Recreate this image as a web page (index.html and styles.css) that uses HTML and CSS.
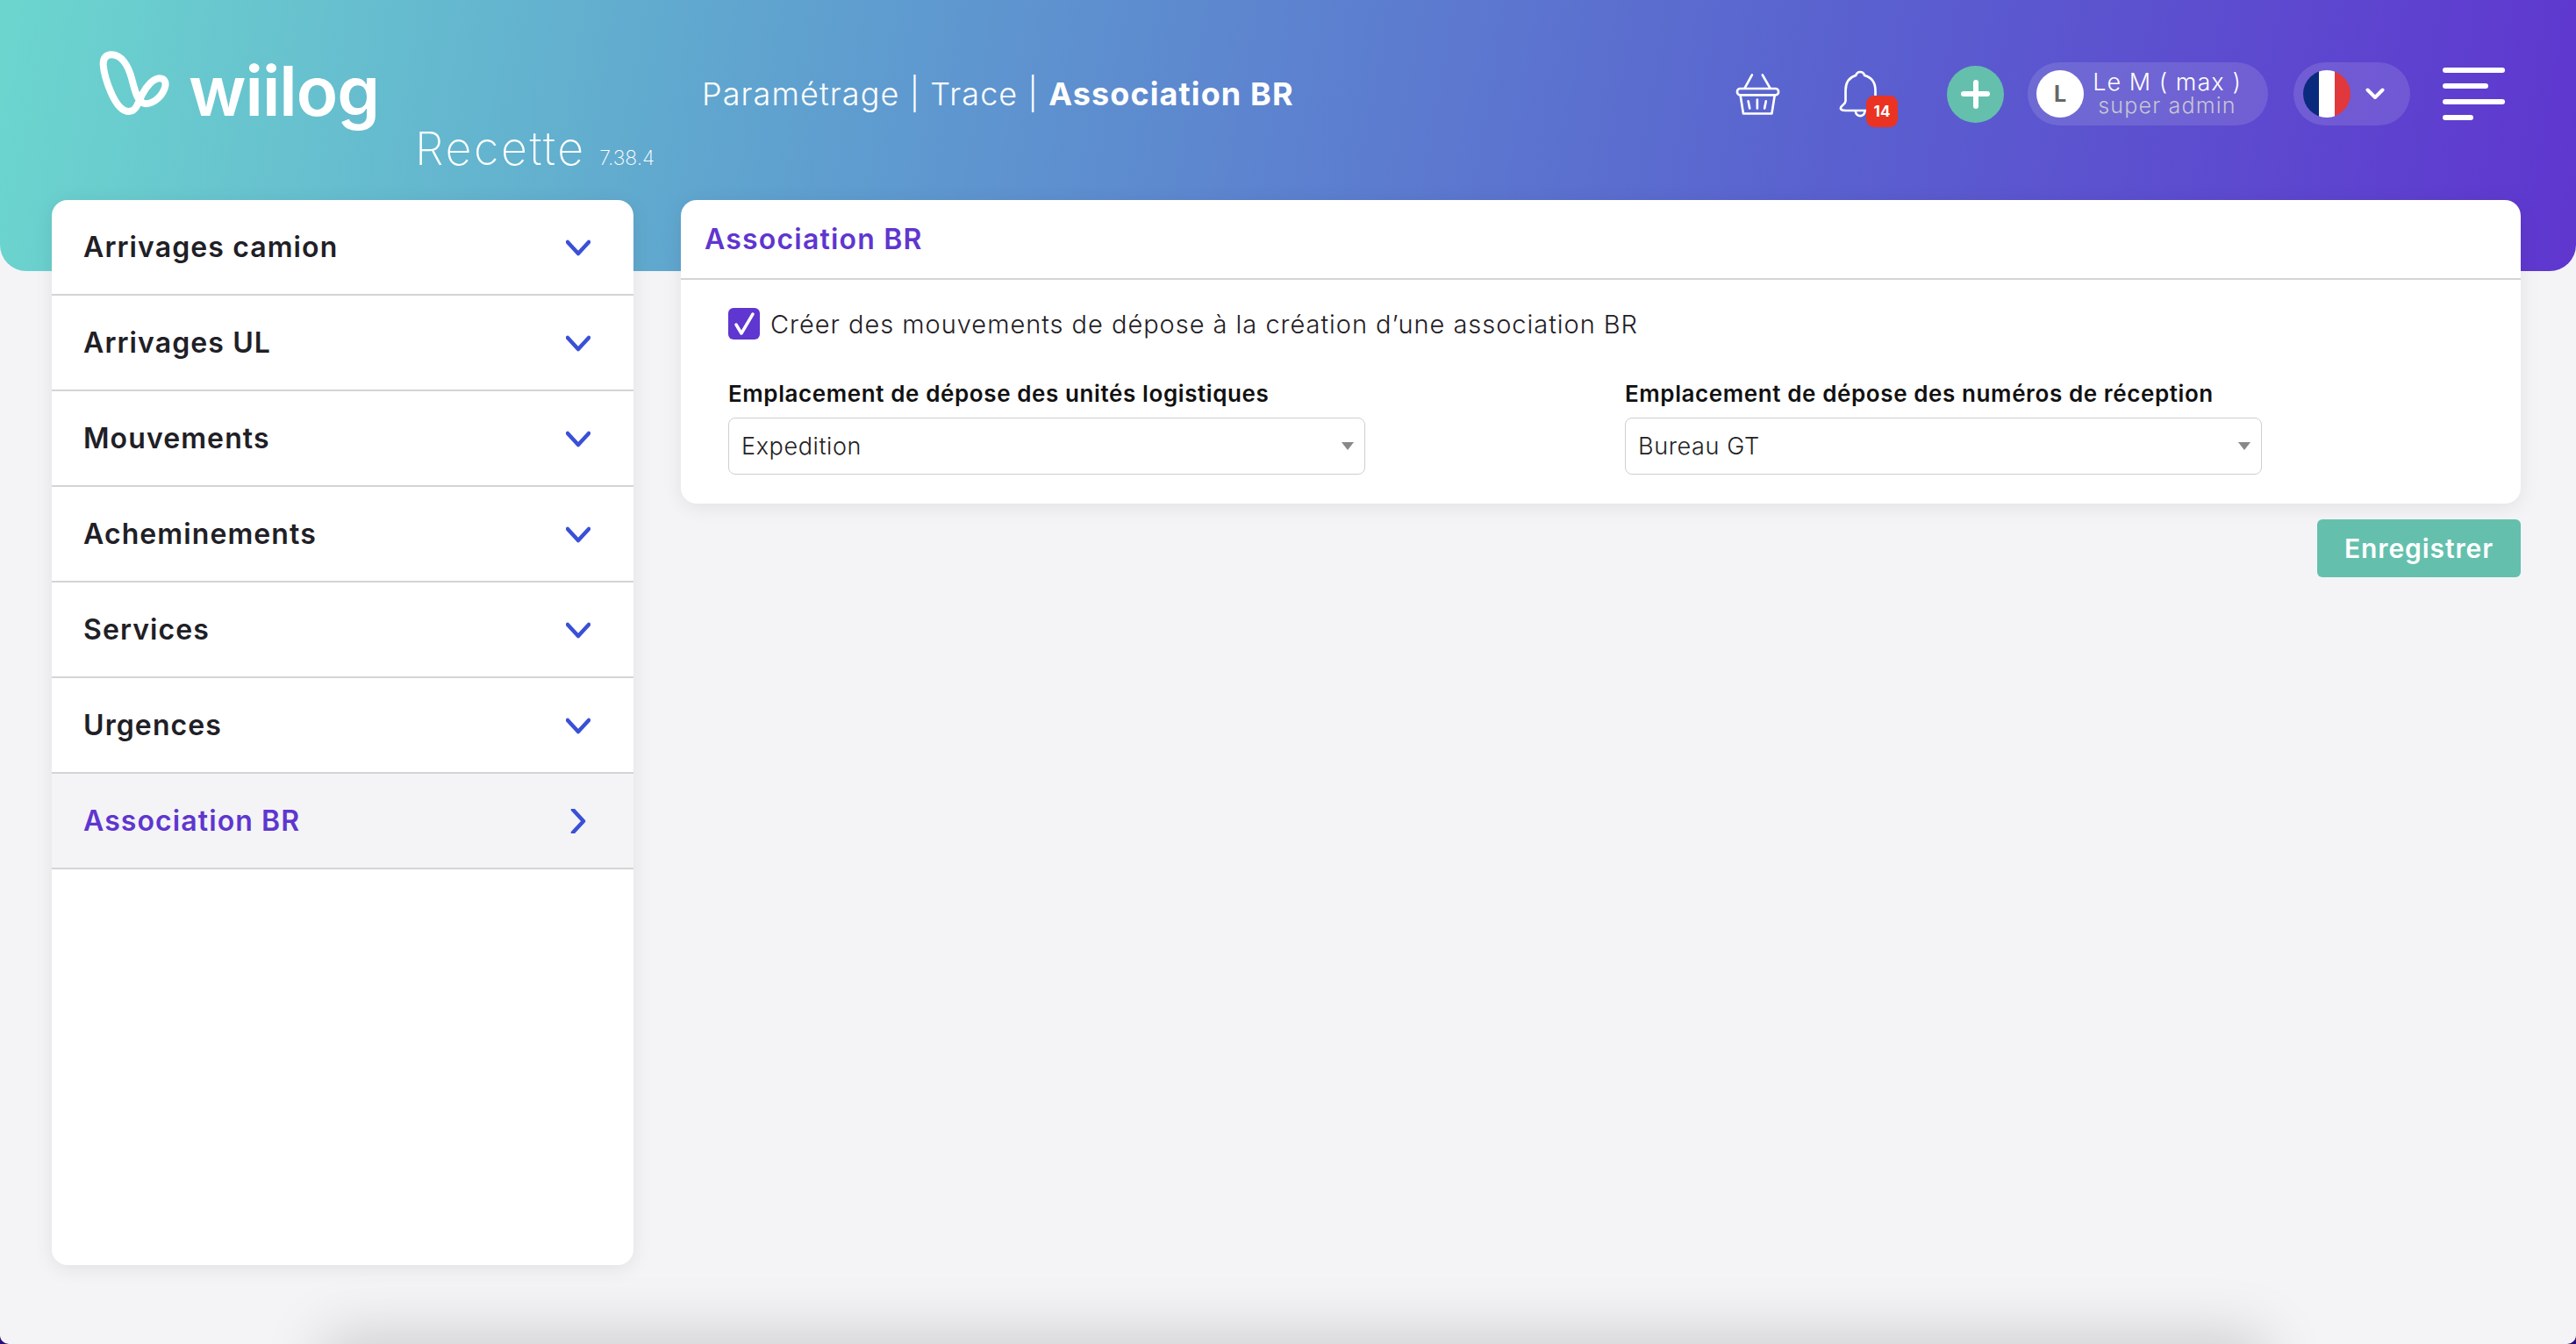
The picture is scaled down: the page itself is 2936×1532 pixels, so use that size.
FILE: index.html
```html
<!DOCTYPE html>
<html lang="fr">
<head>
  <meta charset="UTF-8" />
  <meta name="viewport" content="width=device-width, initial-scale=1.0"/>
  <title>Association BR</title>
  <link rel="stylesheet" href="styles.css">
</head>
<body>
  <div class="page">

    <header class="top-bar">
      <div class="brand">
        <div class="logo">
          <svg class="logo-mark" viewBox="0 0 290 250" width="97" height="83">
            <path d="M80 37 C60 37 52 50 52 70 C55 110 90 232 140 232 C165 232 170 205 185 175 C200 145 225 118 245 118 C265 118 270 135 262 155 C250 185 220 208 195 205 C170 200 162 165 150 120 C138 75 115 37 80 37 Z" fill="none" stroke="#fff" stroke-width="24"/>
          </svg>
          <span class="logo-name">wiilog</span>
        </div>
        <div class="env">Recette <span class="version">7.38.4</span></div>
      </div>

      <div class="breadcrumb">Paramétrage | Trace | <strong>Association BR</strong></div>

      <div class="actions">
        <svg class="basket" viewBox="50 65 160 150" width="53" height="50" fill="none" stroke="#fff" stroke-width="8" stroke-linecap="round" stroke-linejoin="round">
          <rect x="59" y="122" width="142" height="22" rx="10"/>
          <path d="M70 145 L80 208 H178 L188 145"/>
          <path d="M85 120 L110 75 M172 120 L146 75"/>
          <path d="M97 165 L102 190 M128 160 V190 M158 165 L153 190"/>
        </svg>
        <div class="bell">
          <svg viewBox="405 60 140 165" width="47" height="55" fill="none" stroke="#fff" stroke-width="8" stroke-linecap="round" stroke-linejoin="round">
            <path d="M465 78 C470 62 490 62 495 78 C520 85 532 105 532 130 V165 M465 78 C440 85 430 105 430 130 V165 C430 178 414 180 413 190 C413 197 420 198 430 198 H530"/>
            <path d="M464 200 C466 222 494 222 496 200"/>
          </svg>
          <span class="bell-count">14</span>
        </div>
        <div class="add-btn"><span class="plus"></span></div>
        <div class="user-pill">
          <div class="avatar">L</div>
          <div class="user-text">
            <div class="user-name">Le M ( max )</div>
            <div class="user-role">super admin</div>
          </div>
        </div>
        <div class="lang-pill">
          <div class="flag"><i class="blue"></i><i class="white"></i><i class="red"></i></div>
          <svg viewBox="0 0 22 14" width="22" height="14" fill="none" stroke="#fff" stroke-width="4" stroke-linecap="round" stroke-linejoin="round"><path d="M2.5 2.5 L11 11 L19.5 2.5"/></svg>
        </div>
        <div class="burger"><span class="l1"></span><span class="l2"></span><span class="l3"></span><span class="l4"></span></div>
      </div>
    </header>

    <div class="content">
      <nav class="side-menu">
        <div class="menu-row">Arrivages camion <svg class="chev" viewBox="0 0 28 28" width="28" height="28"><path d="M2 8 L14 21 L26 8"/></svg></div>
        <div class="menu-row">Arrivages UL <svg class="chev" viewBox="0 0 28 28" width="28" height="28"><path d="M2 8 L14 21 L26 8"/></svg></div>
        <div class="menu-row">Mouvements <svg class="chev" viewBox="0 0 28 28" width="28" height="28"><path d="M2 8 L14 21 L26 8"/></svg></div>
        <div class="menu-row">Acheminements <svg class="chev" viewBox="0 0 28 28" width="28" height="28"><path d="M2 8 L14 21 L26 8"/></svg></div>
        <div class="menu-row">Services <svg class="chev" viewBox="0 0 28 28" width="28" height="28"><path d="M2 8 L14 21 L26 8"/></svg></div>
        <div class="menu-row">Urgences <svg class="chev" viewBox="0 0 28 28" width="28" height="28"><path d="M2 8 L14 21 L26 8"/></svg></div>
        <div class="menu-row active">Association BR <svg class="chev" viewBox="0 0 28 28" width="28" height="28"><path d="M8 1 L20 14 L8 27"/></svg></div>
      </nav>

      <main class="main-col">
        <section class="card">
          <div class="card-title">Association BR</div>
          <div class="card-body">
            <div class="check-row">
              <span class="checkbox">
                <svg viewBox="0 0 36 36" width="36" height="36" fill="none" stroke="#fff" stroke-width="3.5" stroke-linecap="round" stroke-linejoin="round"><path d="M9 19 L15 29 L28 7"/></svg>
              </span>
              <span class="check-label">Créer des mouvements de dépose à la création d’une association BR</span>
            </div>
            <div class="form-grid">
              <div>
                <div class="field-label">Emplacement de dépose des unités logistiques</div>
                <div class="select-box">Expedition<span class="arrow"></span></div>
              </div>
              <div>
                <div class="field-label">Emplacement de dépose des numéros de réception</div>
                <div class="select-box">Bureau GT<span class="arrow"></span></div>
              </div>
            </div>
          </div>
        </section>
        <div class="btn-row"><button class="save-btn">Enregistrer</button></div>
      </main>
    </div>

    <div class="bottom-shade"></div>
  </div>
</body>
</html>
```

FILE: styles.css
```css
html {
  background: #2a0d7a;
}

body {
  margin: 0;
  padding: 0;
  font-family: Inter, 'Noto Sans', sans-serif;
  color: #1f2026;
}

.page {
  position: relative;
  width: 2936px;
  height: 1532px;
  overflow: hidden;
  background: #f4f4f7;
  border-radius: 0 0 10px 10px;
}

/* top bar */
.top-bar {
  display: flex;
  align-items: flex-start;
  height: 309px;
  box-sizing: border-box;
  background: linear-gradient(100deg, #6cd6ce 0%, #5fa2cf 30%, #5a62cf 70%, #5f36cf 100%);
  border-radius: 0 0 30px 30px;
  color: white;
}

.brand {
  width: 800px;
  flex-shrink: 0;
  box-sizing: border-box;
  padding: 50px 0 0 100px;
}

.logo {
  display: flex;
  align-items: flex-start;
}

.logo-name {
  margin: 15px 0 0 18px;
  font-size: 78px;
  line-height: 78px;
  font-weight: 600;
  letter-spacing: -1px;
}

.env {
  margin: 2px 0 0 373px;
  font-size: 52px;
  line-height: 50px;
  font-weight: 200;
  letter-spacing: 2.6px;
  white-space: nowrap;
}

.version {
  font-size: 23px;
  letter-spacing: 0;
  margin-left: -2px;
}

.breadcrumb {
  margin-top: 71px;
  line-height: 72px;
  font-size: 36px;
  font-weight: 300;
  letter-spacing: 1.1px;
  white-space: nowrap;
}

.breadcrumb strong {
  font-weight: 700;
}

.actions {
  display: flex;
  align-items: center;
  margin: 71px 81px 0 auto;
  height: 72px;
}

.bell {
  position: relative;
  width: 47px;
  height: 55px;
  margin-left: 65px;
}

.bell-count {
  position: absolute;
  left: 32px;
  top: 29px;
  width: 36px;
  height: 36px;
  background: #ea3323;
  border-radius: 9px;
  font-size: 17px;
  line-height: 36px;
  font-weight: 700;
  text-align: center;
}

.add-btn {
  display: flex;
  align-items: center;
  justify-content: center;
  width: 65px;
  height: 65px;
  margin-left: 77px;
  background: #64c0ad;
  border-radius: 50%;
}

.plus {
  position: relative;
  display: block;
  width: 33px;
  height: 6px;
  background: white;
  border-radius: 3px;
}

.plus::after {
  content: "";
  position: absolute;
  left: 13.5px;
  top: -13.5px;
  width: 6px;
  height: 33px;
  background: white;
  border-radius: 3px;
}

.user-pill, .lang-pill {
  display: flex;
  align-items: center;
  height: 72px;
  box-sizing: border-box;
  background: rgba(255,255,255,0.12);
  border-radius: 36px;
}

.user-pill {
  width: 274px;
  margin-left: 27px;
  padding-left: 10px;
}

.avatar {
  width: 54px;
  height: 54px;
  background: white;
  border-radius: 50%;
  color: #666;
  font-size: 25px;
  line-height: 54px;
  font-weight: 700;
  text-align: center;
}

.user-text {
  width: 172px;
  margin-left: 9px;
  text-align: center;
  white-space: nowrap;
}

.user-name {
  font-size: 27px;
  line-height: 27px;
  font-weight: 300;
  letter-spacing: 1.05px;
}

.user-role {
  font-size: 25px;
  line-height: 27px;
  font-weight: 300;
  letter-spacing: 1.2px;
  color: #c6c6d2;
}

.lang-pill {
  width: 133px;
  margin-left: 29px;
  padding-left: 11px;
}

.lang-pill svg {
  margin-left: 17px;
}

.flag {
  display: flex;
  width: 54px;
  height: 54px;
  border-radius: 50%;
  overflow: hidden;
}

.flag i {
  flex: 1;
}

.flag .blue { background: #0a2a7d; }
.flag .white { background: #fff; }
.flag .red { background: #e0383d; }

.burger {
  display: flex;
  flex-direction: column;
  gap: 12.5px;
  width: 71px;
  margin-left: 37px;
}

.burger span {
  display: block;
  height: 5.5px;
  background: white;
  border-radius: 3px;
}

.burger .l1, .burger .l3 { width: 71px; }
.burger .l2 { width: 52px; }
.burger .l4 { width: 35px; }

/* content */
.content {
  display: flex;
  align-items: flex-start;
  gap: 54px;
  margin: -81px 63px 0 59px;
}

.side-menu {
  width: 663px;
  height: 1214px;
  flex-shrink: 0;
  background: white;
  border-radius: 18px;
  box-shadow: 0 4px 22px rgba(0,0,0,0.08);
  overflow: hidden;
}

.menu-row {
  display: flex;
  align-items: center;
  justify-content: space-between;
  height: 109px;
  box-sizing: border-box;
  padding: 0 49px 0 36px;
  border-bottom: 2px solid #d4d4d7;
  font-size: 32px;
  font-weight: 600;
  letter-spacing: 1.1px;
}

.menu-row.active {
  background: #f4f4f7;
  color: #5f36cf;
}

.chev {
  fill: none;
  stroke: #3a50d6;
  stroke-width: 4.5;
  stroke-linecap: round;
  stroke-linejoin: round;
}

.main-col {
  flex: 1;
}

.card {
  height: 346px;
  background: white;
  border-radius: 18px;
  box-shadow: 0 4px 22px rgba(0,0,0,0.08);
}

.card-title {
  height: 91px;
  box-sizing: border-box;
  padding-left: 27px;
  border-bottom: 2px solid #d4d4d7;
  color: #5f36cf;
  font-size: 32px;
  line-height: 89px;
  font-weight: 600;
  letter-spacing: 1.2px;
}

.card-body {
  padding: 32px 0 0 54px;
}

.check-row {
  display: flex;
  align-items: center;
  height: 36px;
}

.checkbox {
  width: 36px;
  height: 36px;
  background: #5f36cf;
  border-radius: 6px;
}

.check-label {
  margin-left: 12px;
  font-size: 29px;
  font-weight: 300;
  letter-spacing: 0.97px;
  white-space: nowrap;
}

.form-grid {
  display: grid;
  grid-template-columns: 726px 726px;
  gap: 296px;
  margin-top: 42px;
}

.field-label {
  font-size: 26px;
  line-height: 40px;
  font-weight: 600;
  letter-spacing: 0.6px;
  color: #111;
  white-space: nowrap;
}

.select-box {
  position: relative;
  height: 65px;
  margin-top: 7px;
  box-sizing: border-box;
  padding-left: 14px;
  border: 1.5px solid #cfcfd3;
  border-radius: 8px;
  font-size: 27px;
  line-height: 64px;
  font-weight: 300;
  letter-spacing: 0.6px;
  color: #222;
}

.arrow {
  position: absolute;
  right: 12px;
  top: 27px;
  width: 0;
  height: 0;
  border-left: 7px solid transparent;
  border-right: 7px solid transparent;
  border-top: 9px solid #888;
}

.btn-row {
  display: flex;
  justify-content: flex-end;
  margin-top: 18px;
}

.save-btn {
  width: 232px;
  height: 66px;
  border: 0;
  border-radius: 6px;
  background: #64c0ad;
  color: white;
  font-family: inherit;
  font-size: 30px;
  font-weight: 600;
  letter-spacing: 0.9px;
}

/* shadow coming from a panel hanging just under the window */
.bottom-shade {
  position: absolute;
  left: 380px;
  top: 1545px;
  width: 2190px;
  height: 60px;
  box-shadow: 0 -10px 70px 10px rgba(0,0,0,0.18);
}
```
